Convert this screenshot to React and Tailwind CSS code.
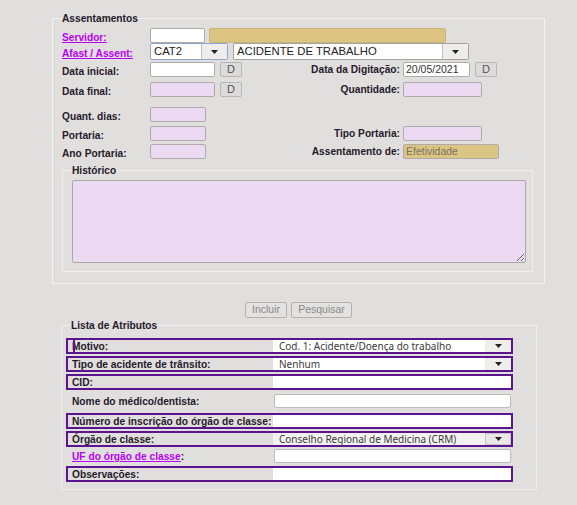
import React from "react";

function Arrow() {
  return (
    <svg width="7" height="4" viewBox="0 0 7 4">
      <path d="M0 0 L7 0 L3.5 4 Z" fill="#222" />
    </svg>
  );
}

function Select({ text, className, focused }) {
  return (
    <div className={`flex h-[17px] items-stretch bg-white border rounded-[2px] ${focused ? "border-[#8ea6cf]" : "border-[#a4a2a0]"} ${className}`}>
      <div className="flex-1 pl-[3px] text-[11.3px] leading-[15px] text-[#222] whitespace-nowrap">{text}</div>
      <div className="w-[26px] flex items-center justify-center bg-[#eeedec] border-l border-[#c4c2c0]">
        <Arrow />
      </div>
    </div>
  );
}

function Input({ color = "white", w, children }) {
  const bg = color == "pink" ? "bg-[#ecdaf2]" : color == "tan" ? "bg-[#dcc583]" : "bg-white";
  return (
    <div className={`h-[15px] ${w} ${bg} border border-[#aeacab] rounded-[2px] pl-[2px] text-[10.5px] leading-[13px] text-[#333]`}>
      {children}
    </div>
  );
}

function DButton() {
  return (
    <div className="ml-[5px] h-[15px] w-[22px] flex items-center justify-center bg-[#dddbd9] border border-[#b9b7b5] rounded-[2px] text-[11px] text-[#555]">
      D
    </div>
  );
}

const label = "text-[10.2px] font-bold text-[#261a2c] leading-[13px] whitespace-nowrap";
const link = "text-[10.2px] font-bold text-[#b800f2] underline leading-[13px] whitespace-nowrap";

function Row({ h = "h-[15px]", mt, left, right, rightLabel }) {
  return (
    <div className={`flex items-center ${h} ${mt}`}>
      <div className="w-[88px]">{left[0]}</div>
      <div className="w-[160px] flex items-center">{left[1]}</div>
      {rightLabel && (
        <>
          <div className={`w-[90px] text-right ${label}`}>{rightLabel}</div>
          <div className="ml-[3px] flex items-center">{right}</div>
        </>
      )}
    </div>
  );
}

function AttrSelect({ text }) {
  return (
    <div className="flex-1 h-full flex items-stretch bg-white">
      <div className="flex-1 pl-[6px] text-[10px] leading-[12px] text-[#3a3a3a] font-['Noto_Sans',sans-serif] whitespace-nowrap">{text}</div>
      <div className="w-[26px] flex items-center justify-center bg-[#efeeed]">
        <Arrow />
      </div>
    </div>
  );
}

function AttrRow({ mt, boxed, children, control, cursor }) {
  return (
    <div className={`flex h-[16px] w-[447px] border-2 ${boxed ? "border-[#5c138e]" : "border-transparent"} ${mt}`}>
      <div className={`relative w-[205px] pl-[4px] ${label} leading-[12px]`}>
        {cursor && <span className="absolute left-[5px] top-0 h-full w-[2px] bg-[#5c138e]" />}
        {children}
      </div>
      {control}
    </div>
  );
}

function PlainInput() {
  return <div className="ml-[1px] flex-1 h-[14px] -mt-[1px] bg-white border border-[#bdbbb9] rounded-[2px]" />;
}

export default function App() {
  return (
    <div className="min-h-[505px] w-[577px] bg-[#e1dfdd] pt-[12px] font-['Liberation_Sans',Arial,sans-serif]">
      <fieldset className="ml-[52px] w-[493px] h-[272px] border border-[#f3f2f1] pl-[9px]">
        <legend className={`${label} px-0`}>Assentamentos</legend>

        <Row mt="mt-[3px]" left={[
          <span className={link}>Servidor:</span>,
          <div className="flex items-center">
            <Input w="w-[55px]" />
            <div className="ml-[4px] h-[15px] w-[237px] bg-[#dcc583] border border-[#c9b577] rounded-[2px]" />
          </div>
        ]} />

        <div className="flex items-center h-[17px]">
          <div className="w-[88px]"><span className={link}>Afast / Assent:</span></div>
          <Select text="CAT2" focused className="w-[78px]" />
          <Select text="ACIDENTE DE TRABALHO" className="ml-[5px] w-[236px]" />
        </div>

        <Row mt="mt-[2px]"
          left={[<span className={label}>Data inicial:</span>, <><Input w="w-[65px]" /><DButton /></>]}
          rightLabel="Data da Digitação:"
          right={<><Input w="w-[67px]">20/05/2021</Input><DButton /></>} />

        <Row mt="mt-[5px]"
          left={[<span className={label}>Data final:</span>, <><Input color="pink" w="w-[65px]" /><DButton /></>]}
          rightLabel="Quantidade:"
          right={<Input color="pink" w="w-[79px]" />} />

        <Row mt="mt-[10px]"
          left={[<span className={label}>Quant. dias:</span>, <Input color="pink" w="w-[56px]" />]} />

        <Row mt="mt-[4px]"
          left={[<span className={label}>Portaria:</span>, <Input color="pink" w="w-[56px]" />]}
          rightLabel="Tipo Portaria:"
          right={<Input color="pink" w="w-[79px]" />} />

        <Row mt="mt-[3px]"
          left={[<span className={label}>Ano Portaria:</span>, <Input color="pink" w="w-[56px]" />]}
          rightLabel="Assentamento de:"
          right={<Input color="tan" w="w-[96px]"><span className="text-[#7a7262]">Efetividade</span></Input>} />

        <fieldset className="mt-[5px] w-[471px] h-[108px] border border-[#efeeed] pl-[9px]">
          <legend className={`${label} px-0`}>Histórico</legend>
          <textarea
            readOnly
            className="mt-[3px] block w-[454px] h-[83px] bg-[#ecdaf2] border border-[#aaa8a6] rounded-[2px] outline-none"
          />
        </fieldset>
      </fieldset>

      <div className="ml-[52px] w-[493px] mt-[18px] flex justify-center gap-[4px]">
        <div className="h-[16px] w-[42px] flex items-center justify-center bg-[#e4e2e0] border border-[#b3b1af] rounded-[2px] text-[10.5px] text-[#8a8886]">Incluir</div>
        <div className="h-[16px] w-[61px] flex items-center justify-center bg-[#e4e2e0] border border-[#b3b1af] rounded-[2px] text-[10.5px] text-[#8a8886]">Pesquisar</div>
      </div>

      <fieldset className="ml-[61px] mt-[1px] w-[476px] h-[171px] border border-[#efeeed] pl-[4px]">
        <legend className={`${label} ml-[5px] px-0`}>Lista de Atributos</legend>

        <AttrRow mt="mt-[6px]" boxed cursor control={<AttrSelect text="Cod. 1: Acidente/Doença do trabalho" />}>Motivo:</AttrRow>
        <AttrRow mt="mt-[2px]" boxed control={<AttrSelect text="Nenhum" />}>Tipo de acidente de trânsito:</AttrRow>
        <AttrRow mt="mt-[2px]" boxed control={<div className="flex-1 h-full bg-white" />}>CID:</AttrRow>
        <AttrRow mt="mt-[3px]" control={<PlainInput />}>Nome do médico/dentista:</AttrRow>
        <AttrRow mt="mt-[4px]" boxed control={<div className="flex-1 h-full bg-white" />}>Número de inscrição do órgão de classe:</AttrRow>
        <AttrRow mt="mt-[2px]" boxed control={
          <div className="flex-1 h-full flex items-stretch bg-[#f4f2f0]">
            <div className="flex-1 pl-[6px] text-[10px] leading-[12px] text-[#3a3a3a] font-['Noto_Sans',sans-serif] whitespace-nowrap">Conselho Regional de Medicina (CRM)</div>
            <div className="w-[26px] flex items-center justify-center bg-[#e9e8e7] border border-[#c8c6c4]">
              <Arrow />
            </div>
          </div>
        }>Órgão de classe:</AttrRow>
        <AttrRow mt="mt-[1px]" control={<PlainInput />}><span className={link}>UF do órgão de classe</span>:</AttrRow>
        <AttrRow mt="mt-[2px]" boxed control={<div className="flex-1 h-full bg-white" />}>Observações:</AttrRow>
      </fieldset>
    </div>
  );
}
